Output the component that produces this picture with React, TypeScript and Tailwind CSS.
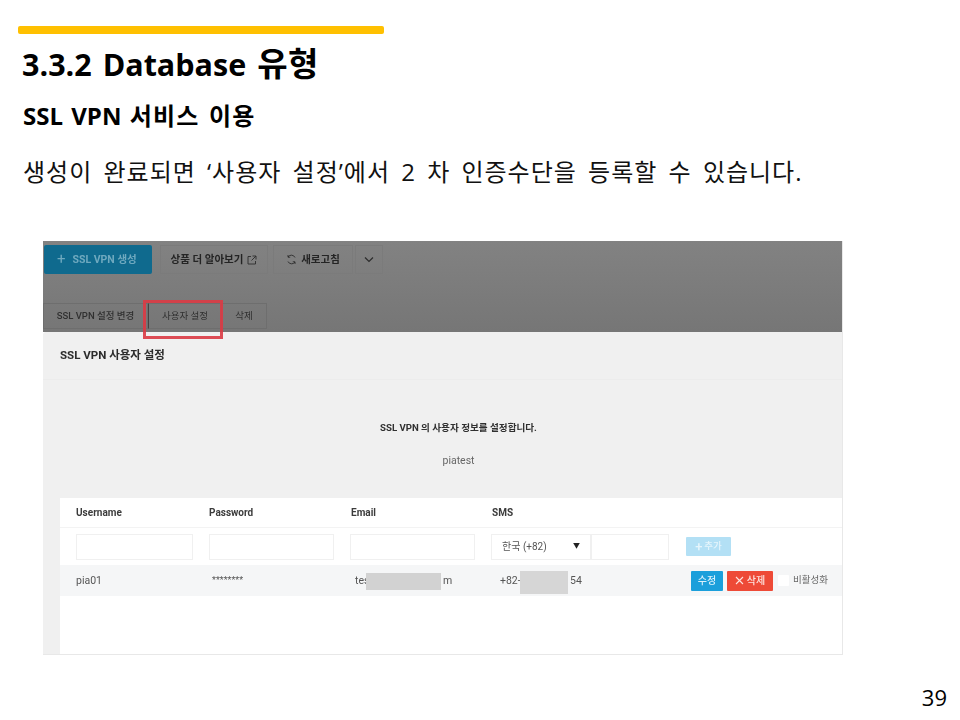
const sans = "font-['Open_Sans','Noto_Sans_CJK_KR',sans-serif]";
const shot = "font-['Roboto','Noto_Sans_CJK_KR',sans-serif]";

function Field({ className }: { className: string }) {
  return <div className={`h-[26px] bg-white border border-[#f0f0f0] ${className}`} />;
}

function ScreenshotPanel() {
  return (
    <div className={`relative w-[800px] h-[414px] ml-[43px] mt-[52px] flex flex-col overflow-hidden border-r border-b border-[#e8e8e8] ${shot}`}>
      <div className="h-[91px] shrink-0 bg-[#7f7f7f] bg-gradient-to-b from-[#828282] to-[#767676] flex flex-col">
        <div className="flex items-center h-[37px] shrink-0">
          <div className="w-[108px] h-[29px] ml-[1px] bg-[#0f6a8e] rounded-[2px] flex items-center pl-[13px] gap-[7px] text-[10.5px] font-bold text-[#6fa9bf] blur-[0.4px]">
            <span className="text-[15px] font-normal leading-none">+</span>SSL VPN 생성
          </div>
          <div className="w-[108px] h-[29px] ml-[8px] border border-[#7b7b7b] flex items-center justify-center gap-[4px] text-[10.5px] font-bold text-[#242424] blur-[0.4px]">
            상품 더 알아보기
            <svg width="10" height="10" viewBox="0 0 10 10" fill="none" stroke="#2c2c2c" strokeWidth="0.9"><path d="M4 1.5H1v7.5h7.5V6M5.5 1h3.5v3.5M9 1 4.5 5.5" /></svg>
          </div>
          <div className="w-[80px] h-[29px] ml-[5px] border border-[#7b7b7b] flex items-center justify-center gap-[4px] text-[10.5px] font-bold text-[#242424] blur-[0.4px]">
            <svg width="11" height="11" viewBox="0 0 11 11" fill="none" stroke="#2c2c2c" strokeWidth="0.9"><path d="M9 3.5A4 4 0 0 0 2 3M2 7.500A4 4 0 0 0 9 8M2 1v2.200h2.200M9 10V7.800H6.800" /></svg>
            새로고침
          </div>
          <div className="w-[28px] h-[29px] ml-[2px] border border-[#7b7b7b] flex items-center justify-center">
            <svg width="10" height="7" viewBox="0 0 10 7" fill="none" stroke="#2c2c2c" strokeWidth="1.200"><path d="M1 1.500 5 5.500 9 1.500" /></svg>
          </div>
        </div>
        <div className="flex mt-[25px] h-[26px] text-[9.500px] text-[#303030] blur-[0.4px]">
          <div className="w-[105px] flex items-center justify-center border border-[#6e6e6e] font-medium">SSL VPN 설정 변경</div>
          <div className="w-[73px] flex items-center justify-center border-y border-[#6e6e6e] border-l border-l-[#444]">사용자 설정</div>
          <div className="w-[46px] flex items-center justify-center border border-[#6e6e6e]">삭제</div>
        </div>
      </div>

      <div className="flex-1 bg-[#f0f0f0] rounded-tl-[3px] flex flex-col">
        <div className="h-[48px] shrink-0 flex items-center pl-[17px] text-[11.500px] font-bold text-[#2c2c2c] border-b border-[#ececec] blur-[0.3px]">
          SSL VPN 사용자 설정
        </div>
        <div className="h-[118px] shrink-0 flex flex-col items-center pl-[32px] pt-[40px] blur-[0.4px]">
          <div className="text-[9.600px] font-bold leading-[15px] text-[#303030]">SSL VPN 의 사용자 정보를 설정합니다.</div>
          <div className="text-[10.500px] leading-[15px] mt-[18px] text-[#666]">piatest</div>
        </div>
        <div className="flex-1 ml-[17px] bg-white flex flex-col">
          <div className="h-[30px] shrink-0 flex items-center text-[10px] font-bold text-[#3c3c3c] border-b border-[#f3f3f3] blur-[0.4px]">
            <span className="w-[149px] pl-[16px]">Username</span>
            <span className="w-[142px]">Password</span>
            <span className="w-[141px]">Email</span>
            <span>SMS</span>
          </div>
          <div className="h-[37px] shrink-0 flex items-center pl-[16px]">
            <Field className="w-[117px]" />
            <Field className="w-[125px] ml-[16px]" />
            <Field className="w-[125px] ml-[16px]" />
            <div className="w-[100px] h-[26px] ml-[16px] bg-white border border-[#f0f0f0] flex items-center justify-between px-[10px] text-[10px] text-[#555] blur-[0.3px]">
              <span>한국 (+82)</span><span className="text-[7px] text-[#222]">▼</span>
            </div>
            <Field className="w-[78px]" />
            <div className="w-[45px] h-[19px] ml-[17px] bg-[#b3e0f5] rounded-[1px] flex items-center justify-center gap-[2px] text-[9.500px] text-[#e6f5fc] font-medium blur-[0.3px]">
              <span className="text-[13px] leading-none">+</span>추가
            </div>
          </div>
          <div className="h-[31px] shrink-0 flex items-center bg-[#f5f6f7] text-[10.500px] text-[#555] blur-[0.3px]">
            <span className="w-[152px] pl-[16px]">pia01</span>
            <span className="w-[143px] text-[9px]">********</span>
            <span className="w-[145px] relative">
              tes
              <span className="absolute left-[11px] top-[0px] w-[75px] h-[17px] bg-[#d2d2d2]" />
              <span className="absolute left-[88px] top-0">m</span>
            </span>
            <span className="w-[191px] relative">
              +82-
              <span className="absolute left-[20px] top-[-2px] w-[48px] h-[23px] bg-[#d6d6d6]" />
              <span className="absolute left-[70px] top-0">54</span>
            </span>
            <div className="w-[32px] h-[20px] bg-[#1b9fdb] rounded-[1px] flex items-center justify-center text-[10px] font-medium text-[#d8f0fb]">수정</div>
            <div className="w-[46px] h-[20px] ml-[4px] bg-[#ee4a37] rounded-[1px] flex items-center justify-center gap-[3px] text-[10px] font-medium text-[#fde4e0]">
              <svg width="9" height="9" viewBox="0 0 9 9" fill="none" stroke="#fde4e0" strokeWidth="1.100"><path d="M1 1l7 7M8 1 1 8" /></svg>
              삭제
            </div>
            <div className="w-[11px] h-[11px] ml-[5px] bg-white rounded-[1px]" />
            <span className="ml-[4px] text-[9.500px] text-[#666] whitespace-nowrap">비활성화</span>
          </div>
        </div>
      </div>

      <div className="absolute left-[100px] top-[59px] w-[80px] h-[39px] border-[3px] border-[#dc3a44] opacity-90 blur-[0.3px]" />
    </div>
  );
}

export default function App() {
  return (
    <div className={`w-[960px] h-[720px] bg-white overflow-hidden flex flex-col text-black ${sans}`}>
      <div className="w-[366px] h-[8px] ml-[18px] mt-[26px] shrink-0 bg-[#ffc000] rounded-[2px]" />
      <h1 className="ml-[22px] mt-[8px] text-[30.500px] leading-[44px] font-bold whitespace-nowrap [word-spacing:3px]">
        3.3.2 Database <span className="text-[33px] tracking-[0.5px]">유형</span>
      </h1>
      <h2 className="ml-[23px] mt-[14px] text-[24px] leading-[32px] font-bold whitespace-nowrap [word-spacing:2px]">
        SSL VPN <span className="tracking-[1.2px]">서비스 이용</span>
      </h2>
      <p className="ml-[23px] mt-[23px] text-[24px] leading-[34px] tracking-[1px] [word-spacing:4px] text-[#111] whitespace-nowrap">생성이 완료되면 ‘사용자 설정’에서 2 차 인증수단을 등록할 수 있습니다.</p>
      <ScreenshotPanel />
      <div className="mt-[30px] mr-[13px] text-right text-[22px] leading-[24px]">39</div>
    </div>
  );
}
